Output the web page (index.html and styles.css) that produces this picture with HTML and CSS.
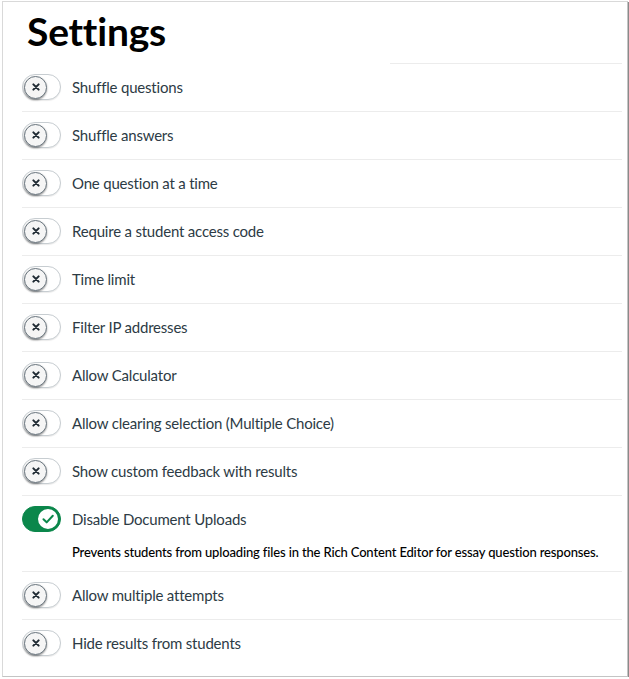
FILE: index.html
```html
<!DOCTYPE html>
<html>
<head>
<meta charset="utf-8">
<link rel="stylesheet" href="styles.css">
</head>
<body>
<div class="frame">
  <div class="header">
    <h1 class="title">Settings</h1>
    <div class="header-rule"></div>
  </div>
  <ul class="list">
    <li class="item first"><div class="row"><span class="toggle"><span class="knob"><svg viewBox="0 0 10 10" class="ico"><path d="M2.8 2.8 L7.2 7.2 M7.2 2.8 L2.8 7.2"/></svg></span></span><span class="label">Shuffle questions</span></div></li>
    <li class="item"><div class="row"><span class="toggle"><span class="knob"><svg viewBox="0 0 10 10" class="ico"><path d="M2.8 2.8 L7.2 7.2 M7.2 2.8 L2.8 7.2"/></svg></span></span><span class="label">Shuffle answers</span></div></li>
    <li class="item"><div class="row"><span class="toggle"><span class="knob"><svg viewBox="0 0 10 10" class="ico"><path d="M2.8 2.8 L7.2 7.2 M7.2 2.8 L2.8 7.2"/></svg></span></span><span class="label">One question at a time</span></div></li>
    <li class="item"><div class="row"><span class="toggle"><span class="knob"><svg viewBox="0 0 10 10" class="ico"><path d="M2.8 2.8 L7.2 7.2 M7.2 2.8 L2.8 7.2"/></svg></span></span><span class="label">Require a student access code</span></div></li>
    <li class="item"><div class="row"><span class="toggle"><span class="knob"><svg viewBox="0 0 10 10" class="ico"><path d="M2.8 2.8 L7.2 7.2 M7.2 2.8 L2.8 7.2"/></svg></span></span><span class="label">Time limit</span></div></li>
    <li class="item"><div class="row"><span class="toggle"><span class="knob"><svg viewBox="0 0 10 10" class="ico"><path d="M2.8 2.8 L7.2 7.2 M7.2 2.8 L2.8 7.2"/></svg></span></span><span class="label">Filter IP addresses</span></div></li>
    <li class="item"><div class="row"><span class="toggle"><span class="knob"><svg viewBox="0 0 10 10" class="ico"><path d="M2.8 2.8 L7.2 7.2 M7.2 2.8 L2.8 7.2"/></svg></span></span><span class="label">Allow Calculator</span></div></li>
    <li class="item"><div class="row"><span class="toggle"><span class="knob"><svg viewBox="0 0 10 10" class="ico"><path d="M2.8 2.8 L7.2 7.2 M7.2 2.8 L2.8 7.2"/></svg></span></span><span class="label">Allow clearing selection (Multiple Choice)</span></div></li>
    <li class="item"><div class="row"><span class="toggle"><span class="knob"><svg viewBox="0 0 10 10" class="ico"><path d="M2.8 2.8 L7.2 7.2 M7.2 2.8 L2.8 7.2"/></svg></span></span><span class="label">Show custom feedback with results</span></div></li>
    <li class="item"><div class="row"><span class="toggle on"><span class="knob"><svg viewBox="0 0 12 12" class="ico check"><path d="M2.6 6.2 L5 8.5 L9.6 3.6"/></svg></span></span><span class="label">Disable Document Uploads</span></div>
      <p class="desc">Prevents students from uploading files in the Rich Content Editor for essay question responses.</p></li>
    <li class="item"><div class="row"><span class="toggle"><span class="knob"><svg viewBox="0 0 10 10" class="ico"><path d="M2.8 2.8 L7.2 7.2 M7.2 2.8 L2.8 7.2"/></svg></span></span><span class="label">Allow multiple attempts</span></div></li>
    <li class="item last"><div class="row"><span class="toggle"><span class="knob"><svg viewBox="0 0 10 10" class="ico"><path d="M2.8 2.8 L7.2 7.2 M7.2 2.8 L2.8 7.2"/></svg></span></span><span class="label">Hide results from students</span></div></li>
  </ul>
</div>
</body>
</html>
```

FILE: styles.css
```css
html, body {
  margin: 0;
  padding: 0;
  background: #ffffff;
}
body {
  font-family: Lato, "Noto Sans", sans-serif;
  color: #2d3b45;
}
.frame {
  box-sizing: border-box;
  margin: 1px 0 0 2px;
  width: 626px;
  height: 676px;
  border: 1px solid #d9d9d9;
  border-right-color: #c4c4c4;
  border-bottom-color: #c4c4c4;
  box-shadow: 1px 1px 0 #8a8a8a;
  padding: 0 5px 0 19px;
  background: #fff;
}
.header {
  height: 61px;
  position: relative;
}
.title {
  margin: 0;
  padding: 4px 0 0 5px;
  font-size: 39px;
  font-weight: 700;
  line-height: 50px;
  color: #000;
  letter-spacing: -0.2px;
}
.header-rule {
  position: absolute;
  left: 368px;
  right: 0;
  bottom: -1px;
  height: 1px;
  background: #ececec;
}
.list {
  list-style: none;
  margin: 0;
  padding: 0;
}
.item {
  border-top: 1px solid #ececec;
  padding: 10px 0 11px 0;
}
.item.first {
  border-top-color: transparent;
}
.item.last {
  padding-bottom: 0;
}
.row {
  display: flex;
  align-items: center;
  gap: 11px;
  height: 26px;
}
.toggle {
  box-sizing: border-box;
  width: 39px;
  height: 26px;
  border-radius: 13px;
  border: 1px solid #c7cdd1;
  background: #ffffff;
  display: flex;
  align-items: center;
  padding: 0 1px;
  flex: none;
  box-shadow: 0 1px 1px rgba(0,0,0,0.08);
}
.knob {
  box-sizing: border-box;
  width: 23px;
  height: 23px;
  border-radius: 50%;
  background: #f5f5f5;
  border: 1px solid #6b7780;
  box-shadow: 0 1px 2px rgba(0,0,0,0.4);
  display: flex;
  align-items: center;
  justify-content: center;
}
.ico {
  width: 12px;
  height: 12px;
  fill: none;
  stroke: #1f2a33;
  stroke-width: 1.7;
  stroke-linecap: round;
}
.toggle.on {
  background: #0b874b;
  border-color: #0b874b;
  justify-content: flex-end;
  padding: 0;
  box-shadow: none;
}
.toggle.on .knob {
  background: #ffffff;
  border: 2px solid #0b874b;
  box-shadow: none;
  width: 24px;
  height: 24px;
}
.ico.check {
  width: 16px;
  height: 16px;
  stroke: #0b874b;
  stroke-width: 1.5;
  stroke-linejoin: round;
}
.label {
  font-size: 15px;
  letter-spacing: -0.2px;
  color: #2d3b45;
  line-height: 20px;
}
.desc {
  margin: 13px 0 0 50px;
  font-size: 13px;
  letter-spacing: -0.15px;
  font-weight: 500;
  color: #000;
  line-height: 15px;
}
```
